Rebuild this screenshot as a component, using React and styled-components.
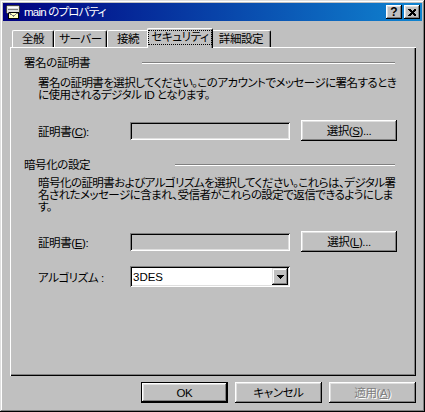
import React from 'react';
import styled, { createGlobalStyle } from 'styled-components';

const FACE = '#c0c0c0';
const LIGHT = '#dfdfdf';
const SHADOW = '#808080';

const Global = createGlobalStyle`
  html, body { margin: 0; padding: 0; background: ${FACE}; }
  body {
    font-family: "Liberation Sans", "Noto Sans CJK JP", sans-serif;
    font-size: 11.5px;
    letter-spacing: -0.4px;
    font-feature-settings: "palt";
    color: #000;
  }
  * { box-sizing: border-box; }
`;

const Window = styled.div`
  width: 425px;
  height: 412px;
  background: ${FACE};
  padding: 3px;
  display: flex;
  flex-direction: column;
  box-shadow: inset -1px -1px #000, inset 1px 1px ${LIGHT},
    inset -2px -2px ${SHADOW}, inset 2px 2px #fff;
`;

const TitleBar = styled.div`
  height: 18px;
  display: flex;
  align-items: center;
  padding: 0 2px;
  background: linear-gradient(to right, #000080, #1084d0);
  color: #fff;
`;

const TitleText = styled.span`
  flex: 1;
  margin-left: 3px;
  line-height: 14px;
  letter-spacing: -0.8px;
  white-space: nowrap;
`;

const CaptionButton = styled.div`
  width: 16px;
  height: 14px;
  margin-left: ${(p) => p.$gap || 0}px;
  background: ${FACE};
  display: flex;
  align-items: center;
  justify-content: center;
  color: #000;
  font-weight: bold;
  font-size: 12px;
  letter-spacing: 0;
  line-height: 12px;
  box-shadow: inset -1px -1px #000, inset 1px 1px #fff,
    inset -2px -2px ${SHADOW}, inset 2px 2px ${LIGHT};
`;

const Body = styled.div`
  flex: 1;
  display: flex;
  flex-direction: column;
  padding: 7px 6px 6px 7px;
`;

const TabStrip = styled.div`
  height: 19px;
  display: flex;
  align-items: flex-end;
  padding-left: 2px;
  position: relative;
  z-index: 1;
`;

const Tab = styled.div`
  width: ${(p) => p.$w + (p.$active ? 4 : 0)}px;
  height: ${(p) => (p.$active ? 20 : 17)}px;
  margin: 0 ${(p) => (p.$active ? -2 : 0)}px ${(p) => (p.$active ? -1 : 0)}px;
  position: relative;
  z-index: ${(p) => (p.$active ? 2 : 1)};
  background: ${FACE};
  border-top: 1px solid #fff;
  border-left: 1px solid #fff;
  border-right: 1px solid #000;
  border-radius: 2px 2px 0 0;
  box-shadow: inset -1px 0 ${SHADOW};
  display: flex;
  align-items: ${(p) => (p.$active ? 'flex-start' : 'center')};
  padding-top: ${(p) => (p.$active ? 1 : 0)}px;
  justify-content: center;
  white-space: nowrap;
  line-height: 14px;
`;

const Focus = styled.span`
  display: inline-block;
  border: 1px dotted #000;
  padding: 0 2px;
  line-height: 13px;
`;

const Panel = styled.div`
  flex: 1;
  display: flex;
  flex-direction: column;
  padding: 9px 18px 0 14px;
  box-shadow: inset 1px 1px #fff, inset -1px -1px #000, inset -2px -2px ${SHADOW};
`;

const GroupHeader = styled.div`
  height: 14px;
  margin-top: ${(p) => p.$mt}px;
  display: grid;
  grid-template-columns: ${(p) => p.$labelWidth}px 1fr;
  align-items: center;
  margin-right: 3px;
`;

const GroupLabel = styled.span`
  line-height: 14px;
  white-space: nowrap;
`;

const Rule = styled.div`
  height: 2px;
  border-top: 1px solid ${SHADOW};
  border-bottom: 1px solid #fff;
`;

const Desc = styled.div`
  margin-top: ${(p) => p.$mt}px;
  padding-left: 14px;
  line-height: 12px;
  letter-spacing: -0.55px;
  white-space: nowrap;
`;

const Line = styled.div`
  height: 12px;
`;

const FieldRow = styled.div`
  margin-top: ${(p) => p.$mt}px;
  height: 21px;
  padding-left: 14px;
  display: flex;
  align-items: center;
`;

const FieldLabel = styled.span`
  width: 92px;
  white-space: nowrap;
`;

const Edit = styled.div`
  width: 160px;
  height: 18px;
  background: ${FACE};
  box-shadow: inset 1px 1px ${SHADOW}, inset -1px -1px #fff,
    inset 2px 2px #000, inset -2px -2px ${LIGHT};
`;

const Combo = styled.div`
  width: 160px;
  height: 21px;
  padding: 2px;
  background: #fff;
  display: flex;
  align-items: center;
  box-shadow: inset 1px 1px ${SHADOW}, inset -1px -1px #fff,
    inset 2px 2px #000, inset -2px -2px ${LIGHT};
`;

const ComboText = styled.span`
  flex: 1;
  padding-left: 1px;
  line-height: 14px;
  letter-spacing: 0;
`;

const ArrowButton = styled.div`
  width: 16px;
  height: 17px;
  background: ${FACE};
  display: flex;
  align-items: center;
  justify-content: center;
  box-shadow: inset -1px -1px #000, inset 1px 1px ${LIGHT},
    inset -2px -2px ${SHADOW}, inset 2px 2px #fff;
`;

const Button = styled.div`
  width: ${(p) => p.$w}px;
  height: 21px;
  margin-left: ${(p) => p.$ml || 0}px;
  display: flex;
  align-items: center;
  justify-content: center;
  background: ${FACE};
  white-space: nowrap;
  line-height: 14px;
  border: ${(p) => (p.$default ? '1px solid #000' : 'none')};
  color: ${(p) => (p.$disabled ? SHADOW : '#000')};
  text-shadow: ${(p) => (p.$disabled ? '1px 1px #fff' : 'none')};
  box-shadow: inset -1px -1px #000, inset 1px 1px #fff,
    inset -2px -2px ${SHADOW}, inset 2px 2px ${LIGHT};
`;

const ButtonRow = styled.div`
  margin-top: 6px;
  height: 21px;
  display: flex;
  justify-content: flex-end;
  gap: 7px;
`;

const U = styled.span`
  text-decoration: underline;
`;

const AppIcon = () => (
  <svg width="16" height="16" viewBox="0 0 16 16" shapeRendering="crispEdges">
    <rect x="1.5" y="1.5" width="13" height="8" rx="2" fill="#dfdfdf" stroke="#404040" />
    <rect x="3" y="3" width="10" height="1" fill="#fff" />
    <rect x="3" y="5" width="10" height="1" fill="#808080" />
    <rect x="3.5" y="8.5" width="10" height="6" fill="#ffffc0" stroke="#000" />
    <polyline points="3.5,8.5 8.5,12 13.5,8.5" fill="none" stroke="#808080" />
  </svg>
);

const CloseGlyph = () => (
  <svg width="8" height="7" viewBox="0 0 8 7" shapeRendering="crispEdges">
    <path d="M0 0h2l2 2 2-2h2v1L5.5 3.5 8 6v1H6L4 5 2 7H0V6l2.5-2.5L0 1z" fill="#000" />
  </svg>
);

const DownArrow = () => (
  <svg width="7" height="4" viewBox="0 0 7 4" shapeRendering="crispEdges">
    <path d="M0 0h7L3.5 4z" fill="#000" />
  </svg>
);

const tabs = [
  { label: '全般', w: 42 },
  { label: 'サーバー', w: 53 },
  { label: '接続', w: 42 },
  { label: 'セキュリティ', w: 62, active: true },
  { label: '詳細設定', w: 60 },
];

export default function App() {
  return (
    <>
      <Global />
      <Window>
        <TitleBar>
          <AppIcon />
          <TitleText>main のプロパティ</TitleText>
          <CaptionButton>?</CaptionButton>
          <CaptionButton $gap={2}>
            <CloseGlyph />
          </CaptionButton>
        </TitleBar>
        <Body>
          <TabStrip>
            {tabs.map((t) => (
              <Tab key={t.label} $w={t.w} $active={t.active}>
                {t.active ? <Focus>{t.label}</Focus> : t.label}
              </Tab>
            ))}
          </TabStrip>
          <Panel>
            <GroupHeader $mt={0} $labelWidth={118}>
              <GroupLabel>署名の証明書</GroupLabel>
              <Rule />
            </GroupHeader>
            <Desc $mt={7}>
              <Line>署名の証明書を選択してください。このアカウントでメッセージに署名するとき</Line>
              <Line>に使用されるデジタル ID となります。</Line>
            </Desc>
            <FieldRow $mt={19}>
              <FieldLabel>
                証明書(<U>C</U>):
              </FieldLabel>
              <Edit />
              <Button $w={96} $ml={11}>
                選択(<U>S</U>)...
              </Button>
            </FieldRow>
            <GroupHeader $mt={17} $labelWidth={151}>
              <GroupLabel>暗号化の設定</GroupLabel>
              <Rule />
            </GroupHeader>
            <Desc $mt={5}>
              <Line>暗号化の証明書およびアルゴリズムを選択してください。これらは、デジタル署</Line>
              <Line>名されたメッセージに含まれ、受信者がこれらの設定で返信できるようにしま</Line>
              <Line>す。</Line>
            </Desc>
            <FieldRow $mt={18}>
              <FieldLabel>
                証明書(<U>E</U>):
              </FieldLabel>
              <Edit />
              <Button $w={96} $ml={11}>
                選択(<U>L</U>)...
              </Button>
            </FieldRow>
            <FieldRow $mt={14}>
              <FieldLabel>アルゴリズム :</FieldLabel>
              <Combo>
                <ComboText>3DES</ComboText>
                <ArrowButton>
                  <DownArrow />
                </ArrowButton>
              </Combo>
            </FieldRow>
          </Panel>
          <ButtonRow>
            <Button $w={87} $default>
              OK
            </Button>
            <Button $w={87}>キャンセル</Button>
            <Button $w={87} $disabled>
              適用(<U>A</U>)
            </Button>
          </ButtonRow>
        </Body>
      </Window>
    </>
  );
}
